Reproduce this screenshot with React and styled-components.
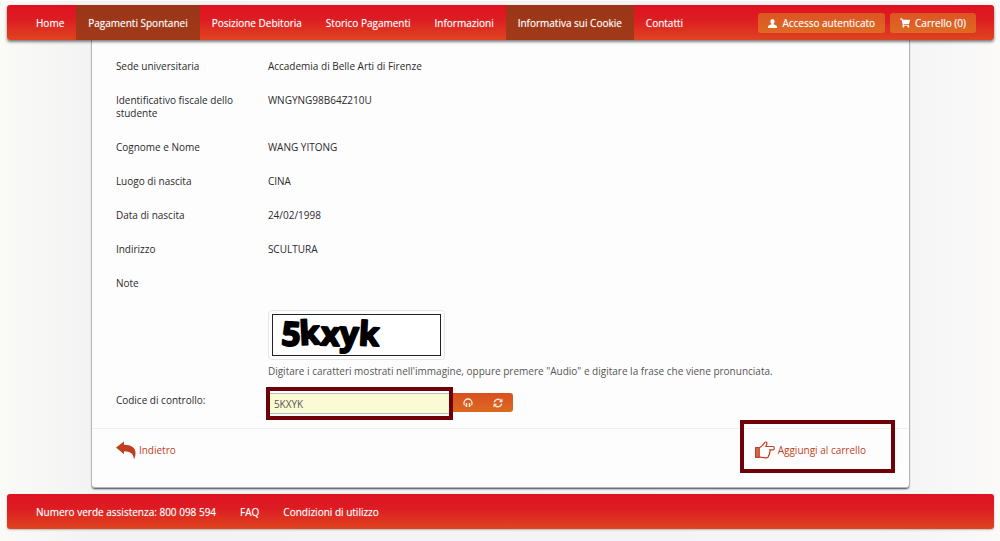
import React, { useState } from 'react';
import styled, { createGlobalStyle, css } from 'styled-components';
import { FaShoppingCart } from 'react-icons/fa';

const GlobalStyle = createGlobalStyle`
  * {
    box-sizing: border-box;
  }

  body {
    margin: 0;
    background: linear-gradient(to right, #fafaf7 0, #f4f3f4 9%, #f6f5f6 91%, #fbfaf9 100%);
    font-family: "Open Sans", "Noto Sans", sans-serif;
    font-size: 10px;
    line-height: 13px;
    color: #2a2a2a;
  }
`;

const Page = styled.div`
  padding: 4px 6px 12px 7px;
  border-top: 1px solid #fff;
`;

const bar = css`
  display: flex;
  align-items: stretch;
  min-height: 35px;
  background: linear-gradient(#df1220, #dd1c22 40%, #df4420);
  border-radius: 3px;
`;

const Header = styled.header`
  ${bar}
  position: relative;
  justify-content: space-between;
  padding: 0 18px 0 17px;
  box-shadow: 0 2px 3px #00000080;
`;

const Nav = styled.nav`
  display: flex;
`;

const NavLink = styled.a`
  display: flex;
  align-items: center;
  padding: 2px 12px 0;
  color: #fff;
  text-decoration: none;
  text-shadow: 0 0 1px #ffffff80;
  background: ${(props) => (props.$active ? 'linear-gradient(#9a3518, #a23a18)' : 'none')};
`;

const Actions = styled.div`
  display: flex;
  align-items: center;
  gap: 5px;
`;

const ActionButton = styled.button`
  display: flex;
  align-items: center;
  gap: 5px;
  height: 20px;
  padding: 1px 10px 0;
  border: 0;
  border-radius: 3px;
  background: linear-gradient(#dd5424, #de6a22);
  color: #fff;
  font: inherit;
  text-shadow: 0 0 1px #ffffff80;
`;

const Card = styled.main`
  width: 83%;
  margin: 0 auto;
  padding-top: 20px;
  background: #fefdfe;
  border: 1px solid #b5b5b9;
  border-top: 0;
  border-radius: 0 0 4px 4px;
  box-shadow: 0 2px 2px -1px #40404c;
`;

const Details = styled.dl`
  display: grid;
  grid-template-columns: 128px 1fr;
  gap: 21px 24px;
  margin: 0 24px;
`;

const Term = styled.dt``;

const Value = styled.dd`
  margin: 0;
`;

const CodeRow = styled.div`
  display: grid;
  grid-template-columns: 128px 1fr;
  column-gap: 24px;
  margin: 20px 24px 0;
`;

const CodeLabel = styled.label`
  align-self: end;
  padding-bottom: 13px;
`;

const Captcha = styled.svg`
  display: block;
  width: 177px;
  height: 50px;
  padding: 3px;
  border: 1px solid #e6e4e6;
  border-radius: 4px;
  overflow: visible;
`;

const Hint = styled.p`
  margin: 5px 0 9px;
  color: #555;
`;

const InputGroup = styled.div`
  display: flex;
  height: 33px;
`;

const CodeField = styled.div`
  display: flex;
  width: 187px;
  margin-left: -2px;
  border: 4px solid #6f0008;
  background: #fefdfe;
  padding: 2px 0;
`;

const CodeInput = styled.input`
  width: 100%;
  padding: 1px 4px 0;
  border: 1px solid #b9bdb8;
  border-width: 1px 0;
  background: #fafbd4;
  color: #555;
  font: inherit;
  outline: 0;
`;

const IconButton = styled.button`
  display: flex;
  align-items: center;
  justify-content: center;
  width: 30px;
  height: 19px;
  margin-top: 6px;
  padding: 0;
  border: 0;
  background: linear-gradient(#d9501f, #da6a22);
  color: #ffe9d8;

  &:last-child {
    border-radius: 0 3px 3px 0;
  }
`;

const CardFooter = styled.div`
  display: flex;
  justify-content: space-between;
  align-items: center;
  height: 59px;
  margin-top: 8px;
  padding: 0 43px 16px 24px;
  border-top: 1px solid #efedef;
`;

const StepLink = styled.a`
  position: relative;
  display: flex;
  align-items: center;
  gap: 3px;
  color: #bf3f20;
  text-decoration: none;

  ${(props) => props.$marked && css`
    &::before {
      content: "";
      position: absolute;
      inset: -21px -29px -14px -15px;
      border: 4px solid #6f0008;
    }
  `}
`;

const Footer = styled.footer`
  ${bar}
  margin-top: 6px;
  padding: 0 17px;
  box-shadow: 0 1px 2px #00000040;
`;

const FooterItem = styled.span`
  display: flex;
  align-items: center;
  padding: 2px 12px 0;
  color: #fff;
  text-decoration: none;
  text-shadow: 0 0 1px #ffffff80;
`;

const links = [
  { label: 'Home' },
  { label: 'Pagamenti Spontanei', active: true },
  { label: 'Posizione Debitoria' },
  { label: 'Storico Pagamenti' },
  { label: 'Informazioni' },
  { label: 'Informativa sui Cookie', active: true },
  { label: 'Contatti' },
];

const details = [
  ['Sede universitaria', 'Accademia di Belle Arti di Firenze'],
  ['Identificativo fiscale dello studente', 'WNGYNG98B64Z210U'],
  ['Cognome e Nome', 'WANG YITONG'],
  ['Luogo di nascita', 'CINA'],
  ['Data di nascita', '24/02/1998'],
  ['Indirizzo', 'SCULTURA'],
  ['Note', ''],
];

const UserIcon = () => (
  <svg width="9" height="9" viewBox="0 0 9 9" fill="currentColor">
    <path d="M4.500 0c1.300 0 2.100 1 2.100 2.200 0 1-.4 1.900-1 2.400v.7l2.600 1.200c.5.200.8.600.8 1.200V9H0V7.700c0-.6.300-1 .8-1.200l2.600-1.200v-.7c-.6-.5-1-1.400-1-2.400C2.400 1 3.200 0 4.500 0z" />
  </svg>
);

const HeadphonesIcon = () => (
  <svg width="10" height="10" viewBox="0 0 10 10" fill="none" stroke="currentColor">
    <path d="M1 6.500V5a4 4 0 0 1 8 0v1.500" strokeWidth="1.300" />
    <path d="M3.500 5v4M6.500 5v4" strokeWidth="1.500" />
    <path d="M.8 6l1.700 1.800M9.200 6L7.500 7.800" />
  </svg>
);

const RefreshIcon = () => (
  <svg width="10" height="10" viewBox="0 0 10 10" fill="none" stroke="currentColor" strokeWidth="1.400">
    <path d="M1.300 4.400a3.800 3.800 0 0 1 6.600-1.900M8.700 5.600a3.800 3.800 0 0 1-6.600 1.900" />
    <path d="M9.500.6v3.700H5.800zM.5 9.400V5.700h3.700z" fill="currentColor" stroke="none" />
  </svg>
);

const BackIcon = () => (
  <svg width="20" height="19" viewBox="0 0 20 19" fill="currentColor">
    <path d="M0 6.500L8 .5v3.300c7.500 0 11.500 3 11.500 8.200 0 2.500-.6 4.500-1.500 6.500-.3-5.500-3.500-8.300-10-8.300v3z" />
  </svg>
);

const HandIcon = () => (
  <svg width="20" height="18" viewBox="0 0 20 18" fill="none" stroke="currentColor" strokeWidth="1.200" strokeLinejoin="round">
    <path d="M.6 6.500h3.600v9.800H.6z" fill="currentColor" fillOpacity=".75" />
    <path d="M4.200 6.800C6 6 8 4 9.600 1.600c.7-1 2.300-.7 2.300.6 0 1-.5 2.200-1.100 3.300h7c2 0 2 3.300 0 3.300h-3.300c1 .9.900 2.300-.2 2.900.6 1 .3 2.200-.8 2.600.2 1.500-.6 2.500-2.300 2.500-3 0-4.500-.2-7-1.100" />
  </svg>
);

const App = () => {
  const [code, setCode] = useState('5KXYK');

  return (
    <>
      <GlobalStyle />
      <Page>
        <Header>
          <Nav>
            {links.map((item) => (
              <NavLink key={item.label} href="#" $active={item.active}>{item.label}</NavLink>
            ))}
          </Nav>
          <Actions>
            <ActionButton type="button"><UserIcon />Accesso autenticato</ActionButton>
            <ActionButton type="button"><FaShoppingCart size={10} />Carrello (0)</ActionButton>
          </Actions>
        </Header>

        <Card>
          <Details>
            {details.map(([label, value]) => (
              <React.Fragment key={label}>
                <Term>{label}</Term>
                <Value>{value}</Value>
              </React.Fragment>
            ))}
          </Details>

          <CodeRow>
            <CodeLabel htmlFor="code">Codice di controllo:</CodeLabel>
            <div>
              <Captcha viewBox="0 0 169 42">
                <rect x="0.500" y="0.500" width="168" height="41" fill="#fff" stroke="#222" />
                <text
                  x="9"
                  y="31"
                  fontFamily="Open Sans, sans-serif"
                  fontWeight="700"
                  fontSize="33"
                  stroke="#000"
                  strokeWidth="2"
                  strokeLinejoin="round"
                  rotate="4 -3 3 2 3"
                >
                  5kxyk
                </text>
              </Captcha>
              <Hint>Digitare i caratteri mostrati nell'immagine, oppure premere "Audio" e digitare la frase che viene pronunciata.</Hint>
              <InputGroup>
                <CodeField>
                  <CodeInput id="code" value={code} onChange={(e) => setCode(e.target.value)} />
                </CodeField>
                <IconButton type="button" aria-label="Audio"><HeadphonesIcon /></IconButton>
                <IconButton type="button" aria-label="Ricarica"><RefreshIcon /></IconButton>
              </InputGroup>
            </div>
          </CodeRow>

          <CardFooter>
            <StepLink href="#"><BackIcon />Indietro</StepLink>
            <StepLink href="#" $marked><HandIcon />Aggiungi al carrello</StepLink>
          </CardFooter>
        </Card>

        <Footer>
          <FooterItem>Numero verde assistenza: 800 098 594</FooterItem>
          <FooterItem as="a" href="#">FAQ</FooterItem>
          <FooterItem as="a" href="#">Condizioni di utilizzo</FooterItem>
        </Footer>
      </Page>
    </>
  );
};

export default App;
